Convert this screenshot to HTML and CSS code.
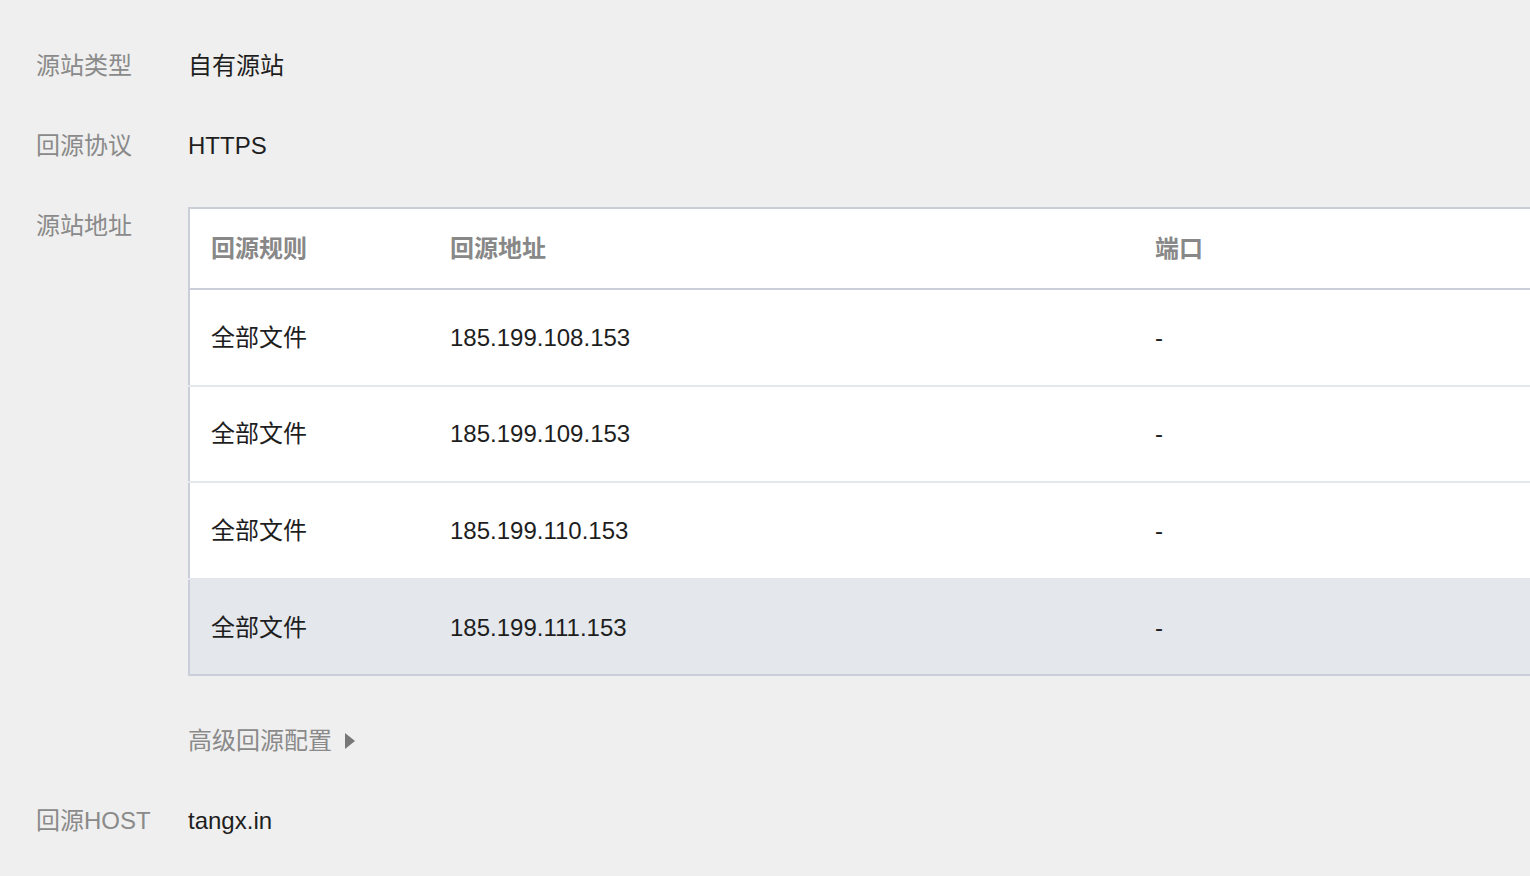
FILE: index.html
```html
<!DOCTYPE html>
<html lang="zh-CN">
<head>
<meta charset="utf-8">
<title>源站配置</title>
<link rel="stylesheet" href="styles.css">
</head>
<body>
<div class="page">
  <div class="row">
    <div class="label">源站类型</div>
    <div class="value">自有源站</div>
  </div>
  <div class="row">
    <div class="label">回源协议</div>
    <div class="value">HTTPS</div>
  </div>
  <div class="row">
    <div class="label">源站地址</div>
    <div class="content">
      <table class="origin-table">
        <colgroup>
          <col class="c1"><col class="c2"><col class="c3">
        </colgroup>
        <thead>
          <tr><th>回源规则</th><th>回源地址</th><th>端口</th></tr>
        </thead>
        <tbody>
          <tr><td>全部文件</td><td>185.199.108.153</td><td>-</td></tr>
          <tr><td>全部文件</td><td>185.199.109.153</td><td>-</td></tr>
          <tr><td>全部文件</td><td>185.199.110.153</td><td>-</td></tr>
          <tr class="hover"><td>全部文件</td><td>185.199.111.153</td><td>-</td></tr>
        </tbody>
      </table>
      <div class="advanced">高级回源配置<span class="tri"></span></div>
    </div>
  </div>
  <div class="row">
    <div class="label">回源HOST</div>
    <div class="value">tangx.in</div>
  </div>
</div>
</body>
</html>
```

FILE: styles.css
```css
html, body {
  margin: 0;
  padding: 0;
  background: #efefef;
  overflow: hidden;
}
body {
  font-family: "Liberation Sans", "Noto Sans CJK SC", sans-serif;
  font-size: 24px;
  color: #222;
  width: 1530px;
  height: 876px;
}
.page {
  padding: 48px 0 0 36px;
}
.row {
  display: flex;
  align-items: flex-start;
  margin-bottom: 44px;
  line-height: 36px;
}
.label {
  width: 152px;
  flex-shrink: 0;
  color: #8a8a8a;
  white-space: nowrap;
}
.value {
  color: #1e1e1e;
}
.content {
  flex-shrink: 0;
  margin-top: -1px;
}
.origin-table {
  width: 1400px;
  border-collapse: collapse;
  background: #fff;
  border-top: 2px solid #c9ced9;
  border-left: 2px solid #c9ced9;
  border-bottom: 2px solid #c9ced9;
  table-layout: fixed;
}
.c1 { width: 240px; }
.c2 { width: 705px; }
.origin-table th {
  text-align: left;
  font-weight: bold;
  color: #888;
  height: 78px;
  padding: 1px 0 0 21px;
  border-bottom: 2px solid #c9ced9;
  line-height: 36px;
}
.origin-table td {
  height: 93.6px;
  padding: 1px 0 0 21px;
  color: #1e1e1e;
  border-bottom: 2px solid #e3e6eb;
  line-height: 36px;
}
.origin-table tr:last-child td {
  border-bottom: none;
}
.origin-table tr.hover td {
  background: #e4e8ec;
}
.advanced {
  margin-top: 47px;
  color: #8a8a8a;
  display: flex;
  align-items: center;
}
.tri {
  display: inline-block;
  width: 0;
  height: 0;
  margin-left: 13px;
  border-top: 8px solid transparent;
  border-bottom: 8px solid transparent;
  border-left: 10px solid #777;
}
```
